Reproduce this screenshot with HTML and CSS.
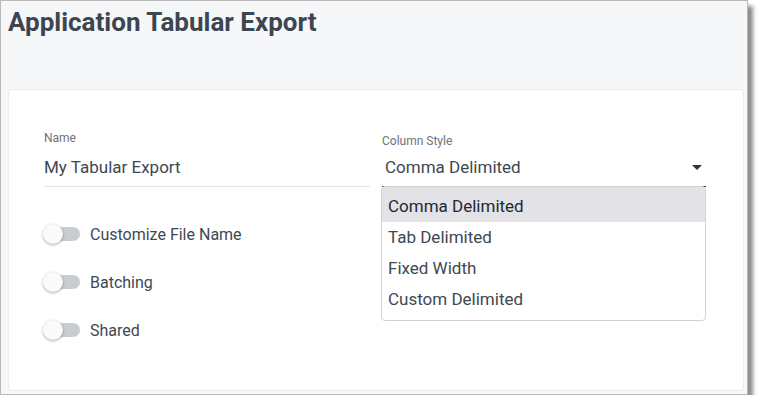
FILE: index.html
```html
<!DOCTYPE html>
<html lang="en">
<head>
  <meta charset="UTF-8">
  <meta name="viewport" content="width=device-width, initial-scale=1.0">
  <title>Application Tabular Export</title>
  <link rel="stylesheet" href="styles.css">
</head>
<body>
  <div class="window">
      <h1 class="page-title">Application Tabular Export</h1>

      <div class="card">
          <div class="form-grid">
              <div class="col">
                  <div class="field">
                      <label class="field-label">Name</label>
                      <div class="field-input">My Tabular Export</div>
                  </div>

                  <div class="toggle-list">
                      <div class="toggle-row">
                          <span class="switch"><span class="knob"></span></span>
                          <span class="toggle-text">Customize File Name</span>
                      </div>
                      <div class="toggle-row">
                          <span class="switch"><span class="knob"></span></span>
                          <span class="toggle-text">Batching</span>
                      </div>
                      <div class="toggle-row">
                          <span class="switch"><span class="knob"></span></span>
                          <span class="toggle-text">Shared</span>
                      </div>
                  </div>
              </div>

              <div class="col">
                  <div class="field select-field">
                      <label class="field-label">Column Style</label>
                      <div class="field-input select-input">
                          <span>Comma Delimited</span>
                          <svg class="caret" width="10" height="5" viewBox="0 0 10 5"><path d="M0 0 L10 0 L5 5 Z" fill="#333"/></svg>
                      </div>

                      <ul class="menu">
                          <li class="menu-item selected">Comma Delimited</li>
                          <li class="menu-item">Tab Delimited</li>
                          <li class="menu-item">Fixed Width</li>
                          <li class="menu-item">Custom Delimited</li>
                      </ul>
                  </div>
              </div>
          </div>
      </div>
  </div>
</body>
</html>
```

FILE: styles.css
```css
body {
    margin: 0;
    background-color: #ffffff;
    font-family: Roboto, 'Liberation Sans', sans-serif;
    color: #3e4852;
}
.window {
    width: 748px;
    height: 395px;
    box-sizing: border-box;
    border: 1px solid #b9b9b9;
    background-color: #f6f7f9;
    padding: 5px 3px 0 7px;
    box-shadow: 5px 6px 4px rgba(0, 0, 0, 0.45);
}
.page-title {
    margin: 0;
    font-size: 26px;
    line-height: 32px;
    font-weight: bold;
    color: #3c4650;
}
.card {
    margin-top: 51px;
    height: 302px;
    box-sizing: border-box;
    background-color: #ffffff;
    border: 1px solid #ebecef;
    border-radius: 3px;
    padding: 40px 36px 0 35px;
}
.form-grid {
    display: grid;
    grid-template-columns: 326px 324px;
    gap: 12px;
}
.field {
    display: flex;
    flex-direction: column;
}
.field-label {
    font-size: 12px;
    line-height: 16px;
    color: #6b737b;
}
.field-input {
    margin-top: 9px;
    font-size: 17px;
    line-height: 24px;
    padding-bottom: 7px;
    border-bottom: 1px solid #e3e5e8;
}
.select-field {
    position: relative;
    padding-top: 3px;
}
.select-input {
    margin-top: 6px;
    display: flex;
    justify-content: space-between;
    align-items: center;
    padding-left: 3px;
    padding-right: 4px;
    border-bottom-color: #3a3a3a;
}
.menu {
    position: absolute;
    top: 56px;
    left: -1px;
    right: 0;
    margin: 0;
    padding: 0 0 5px;
    list-style: none;
    background-color: #ffffff;
    border: 1px solid #cfd2d6;
    border-radius: 4px;
}
.menu-item {
    font-size: 17px;
    line-height: 31px;
    padding-left: 6px;
    color: #3e4852;
}
.menu-item.selected {
    padding-top: 4px;
    background-color: #e2e2e7;
    color: #1e2832;
}
.toggle-list {
    margin-top: 23px;
}
.toggle-row {
    display: flex;
    align-items: center;
    height: 48px;
}
.switch {
    position: relative;
    width: 36px;
    height: 14px;
    border-radius: 7px;
    background-color: #c9cdd1;
    margin-right: 10px;
}
.knob {
    position: absolute;
    left: -1px;
    top: -3px;
    width: 20px;
    height: 20px;
    border-radius: 50%;
    background-color: #fafafa;
    box-shadow: 0 1px 3px rgba(0, 0, 0, 0.35);
}
.toggle-text {
    font-size: 16px;
    color: #3e4852;
}
```
